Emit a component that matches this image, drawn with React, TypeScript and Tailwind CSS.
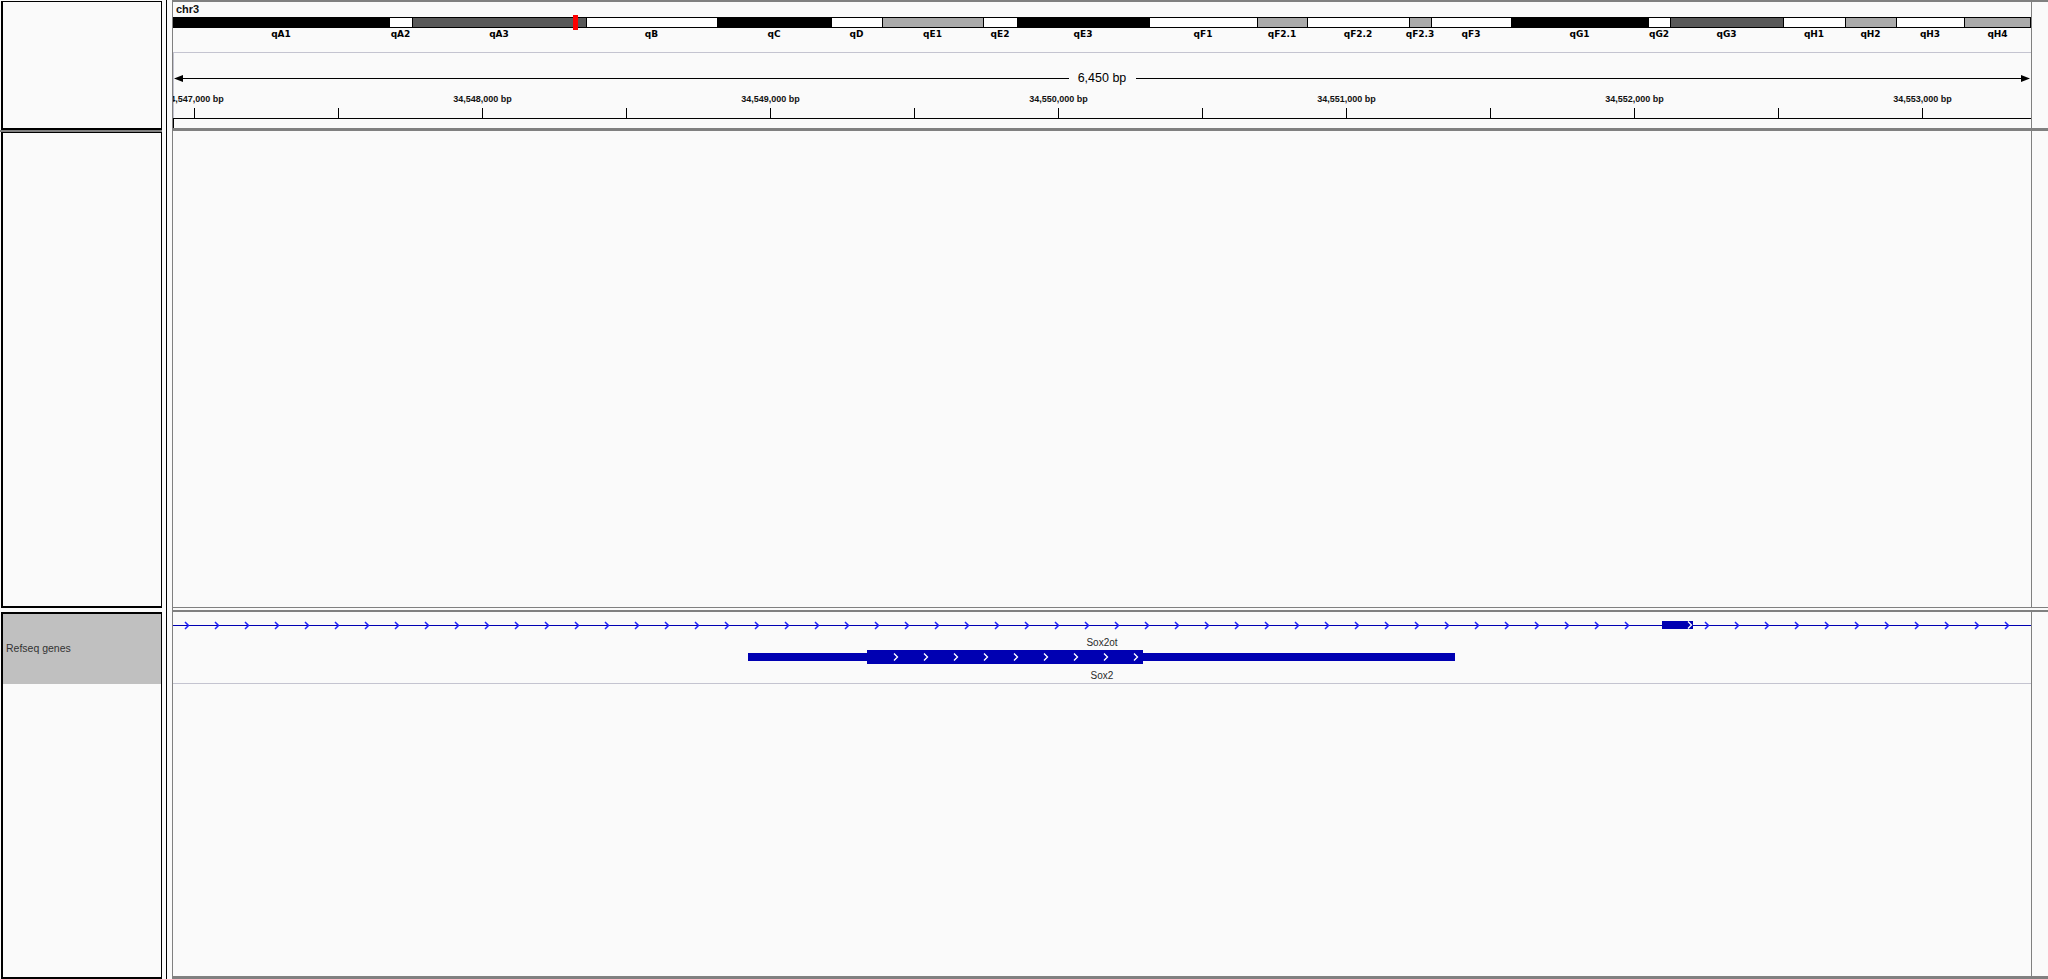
import React from "react";

const X0 = 173;
const W = 1858;
const r = (x: number) => x - X0;

const BLACK = "#000000";
const DARK = "#595959";
const LIGHT = "#aaaaaa";
const WHITE = "#ffffff";
const BLUE = "#0000b2";
const CHEV = "#2020ff";

type Band = { name: string; s: number; e: number; c: string };
const bands: Band[] = [
  { name: "qA1", s: 173, e: 389, c: BLACK },
  { name: "qA2", s: 389, e: 412, c: WHITE },
  { name: "qA3", s: 412, e: 586, c: DARK },
  { name: "qB", s: 586, e: 717, c: WHITE },
  { name: "qC", s: 717, e: 831, c: BLACK },
  { name: "qD", s: 831, e: 882, c: WHITE },
  { name: "qE1", s: 882, e: 983, c: LIGHT },
  { name: "qE2", s: 983, e: 1017, c: WHITE },
  { name: "qE3", s: 1017, e: 1149, c: BLACK },
  { name: "qF1", s: 1149, e: 1257, c: WHITE },
  { name: "qF2.1", s: 1257, e: 1307, c: LIGHT },
  { name: "qF2.2", s: 1307, e: 1409, c: WHITE },
  { name: "qF2.3", s: 1409, e: 1431, c: LIGHT },
  { name: "qF3", s: 1431, e: 1511, c: WHITE },
  { name: "qG1", s: 1511, e: 1648, c: BLACK },
  { name: "qG2", s: 1648, e: 1670, c: WHITE },
  { name: "qG3", s: 1670, e: 1783, c: DARK },
  { name: "qH1", s: 1783, e: 1845, c: WHITE },
  { name: "qH2", s: 1845, e: 1896, c: LIGHT },
  { name: "qH3", s: 1896, e: 1964, c: WHITE },
  { name: "qH4", s: 1964, e: 2031, c: LIGHT },
];

const majorTicks = [194, 482, 770, 1058, 1346, 1634, 1922];
const tickLabels = [
  "34,547,000 bp",
  "34,548,000 bp",
  "34,549,000 bp",
  "34,550,000 bp",
  "34,551,000 bp",
  "34,552,000 bp",
  "34,553,000 bp",
];
const minorTicks = [338, 626, 914, 1202, 1490, 1778];

const lineChevrons: number[] = [];
for (let x = 187; x <= 1627; x += 30) lineChevrons.push(x);
for (let x = 1707; x <= 2017; x += 30) lineChevrons.push(x);
const geneChevrons: number[] = [];
for (let x = 896; x <= 1136; x += 30) geneChevrons.push(x);

function Chevron({ x, y, color, w = 1.3 }: { x: number; y: number; color: string; w?: number }) {
  return (
    <path
      d={`M${x - 2} ${y - 3.5} L${x + 1.5} ${y} L${x - 2} ${y + 3.5}`}
      stroke={color}
      strokeWidth={w}
      fill="none"
    />
  );
}

function Strip() {
  return <div className="flex-1 border-l border-[#808080]" />;
}

function HeaderTrack() {
  return (
    <div className="w-[1858px] flex flex-col">
      <div className="h-[15px] pl-[3px] text-[11px] font-bold leading-[15px] text-[#111]">chr3</div>
      <div className="h-[11px]">
        <svg width={W} height={11} className="overflow-visible block">
          {bands.map((b) => (
            <rect
              key={b.name}
              x={r(b.s) + 0.5}
              y={0.5}
              width={Math.min(b.e, 2030) - b.s}
              height={10}
              fill={b.c}
              stroke="#000"
              strokeWidth={1}
            />
          ))}
          <rect x={r(573)} y={-2} width={5} height={15} fill="#ff0000" />
        </svg>
      </div>
      <div className="relative h-[12px]">
        {bands.map((b) => (
          <div
            key={b.name}
            className="absolute top-0 -translate-x-1/2 whitespace-nowrap text-[9px] font-bold leading-[12px] text-black"
            style={{ left: r((b.s + b.e) / 2), fontFamily: '"DejaVu Sans", sans-serif' }}
          >
            {b.name}
          </div>
        ))}
      </div>
      <div className="h-[12px]" />
      <div className="relative h-[66px] overflow-hidden">
        <svg width={W} height={66} className="absolute left-0 top-0 block">
          <line x1={0} y1={0.5} x2={W} y2={0.5} stroke="#c4c4d0" />
          <line x1={0.5} y1={0} x2={0.5} y2={66} stroke="#c4c4d0" />
          <line x1={2} y1={26.5} x2={r(1069)} y2={26.5} stroke="#000" />
          <line x1={r(1136)} y1={26.5} x2={W - 2} y2={26.5} stroke="#000" />
          <polygon points="1,26.5 10,23 10,30" fill="#000" />
          <polygon points={`${W - 1},26.5 ${W - 10},23 ${W - 10},30`} fill="#000" />
          {majorTicks.map((x) => (
            <rect key={x} x={r(x)} y={56} width={1} height={10} fill="#000" />
          ))}
          {minorTicks.map((x) => (
            <rect key={x} x={r(x)} y={56} width={1} height={10} fill="#000" />
          ))}
        </svg>
        <div
          className="absolute top-[18px] -translate-x-1/2 whitespace-nowrap text-[12.5px] leading-[16px] text-black"
          style={{ left: r(1102) }}
        >
          6,450 bp
        </div>
        {majorTicks.map((x, i) => (
          <div
            key={x}
            className="absolute top-[41px] -translate-x-1/2 whitespace-nowrap text-[9px] font-bold leading-[12px] text-[#111]"
            style={{ left: r(x) + 0.5 }}
          >
            {tickLabels[i]}
          </div>
        ))}
      </div>
      <div className="h-[10px] border-t border-l border-black" />
    </div>
  );
}

function GeneTrack() {
  return (
    <div className="w-[1858px] flex flex-col">
      <div className="relative h-[72px] border-b border-[#c4c4d0]">
        <svg width={W} height={71} className="absolute left-0 top-0 block">
          <line x1={0} y1={13.5} x2={W} y2={13.5} stroke={BLUE} strokeWidth={1} />
          {lineChevrons.map((x) => (
            <Chevron key={x} x={r(x)} y={13.5} color={CHEV} w={1.5} />
          ))}
          <rect x={r(1662)} y={9} width={31} height={8} fill={BLUE} />
          <Chevron x={r(1690)} y={13} color="#ffffff" />
          <rect x={r(748)} y={41} width={1455 - 748} height={8} fill={BLUE} />
          <rect x={r(867)} y={38} width={1143 - 867} height={14} fill={BLUE} />
          {geneChevrons.map((x) => (
            <Chevron key={x} x={r(x)} y={45} color="#ffffff" />
          ))}
        </svg>
        <div
          className="absolute top-[25px] -translate-x-1/2 whitespace-nowrap text-[10px] leading-[12px] text-[#2a2a2a]"
          style={{ left: r(1102) }}
        >
          Sox2ot
        </div>
        <div
          className="absolute top-[58px] -translate-x-1/2 whitespace-nowrap text-[10px] leading-[12px] text-[#2a2a2a]"
          style={{ left: r(1102) }}
        >
          Sox2
        </div>
      </div>
    </div>
  );
}

export default function App() {
  return (
    <div
      className="w-[2048px] h-[979px] bg-[#fafafa] flex overflow-hidden"
      style={{ fontFamily: '"Liberation Sans", Arial, sans-serif' }}
    >
      <div className="w-[166px] flex flex-col pr-[4px]">
        <div className="h-[129px] mt-px ml-px border-l-2 border-t border-b-2 border-r border-black" />
        <div className="h-[2px] bg-[#808080]" />
        <div className="h-[476px] ml-px border-l-2 border-t border-b-2 border-r border-black" />
        <div className="h-[4px]" />
        <div className="h-[367px] ml-px border-l-2 border-t-2 border-b-2 border-r border-black flex flex-col">
          <div className="h-[70px] bg-[#c0c0c0] flex items-center pl-[3px] text-[10.5px] text-[#333]">
            Refseq genes
          </div>
        </div>
      </div>
      <div className="w-px bg-black" />
      <div className="w-[5px]" />
      <div className="flex-1 flex flex-col border-l border-[#808080]">
        <div className="h-[128px] border-t-2 border-[#808080] flex">
          <HeaderTrack />
          <Strip />
        </div>
        <div className="h-[3px] bg-[#808080]" />
        <div className="h-[476px] flex">
          <div className="w-[1858px]" />
          <Strip />
        </div>
        <div className="h-px bg-[#808080]" />
        <div className="h-[2px]" />
        <div className="h-[2px] bg-[#808080]" />
        <div className="h-[364px] flex">
          <GeneTrack />
          <Strip />
        </div>
        <div className="h-[3px] bg-[#808080]" />
      </div>
    </div>
  );
}
